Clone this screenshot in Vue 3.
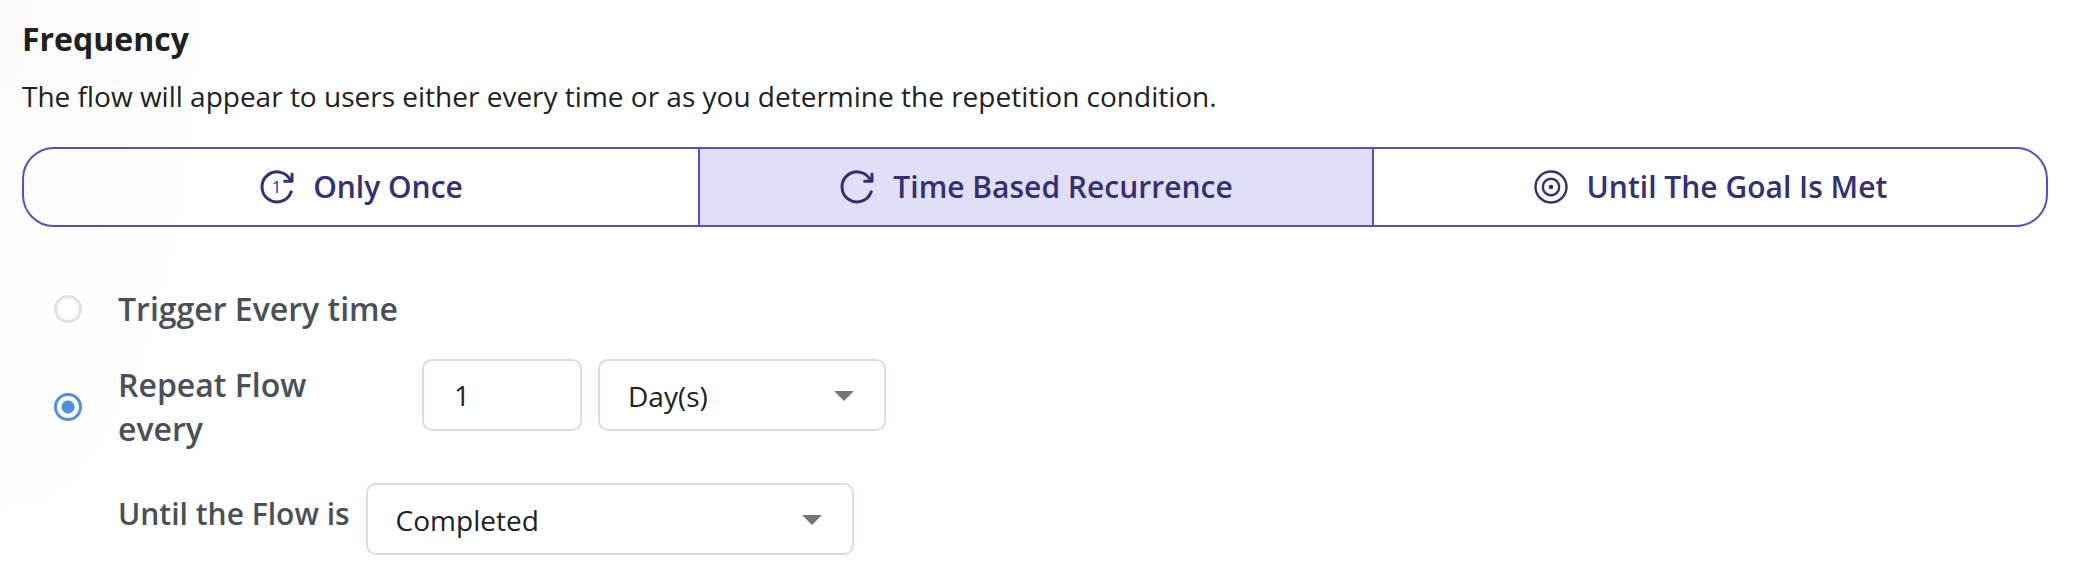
<script setup>
import { ref } from 'vue'

const tabs = [
  { id: 'once', label: 'Only Once' },
  { id: 'time', label: 'Time Based Recurrence' },
  { id: 'goal', label: 'Until The Goal Is Met' },
]
const activeTab = ref('time')
const mode = ref('repeat')
const amount = ref('1')
const unit = ref('Day(s)')
const until = ref('Completed')
</script>

<template>
  <main class="page">
    <h2 class="title">Frequency</h2>
    <p class="description">
      The flow will appear to users either every time or as you determine the repetition condition.
    </p>

    <div class="tabs" role="group" aria-label="Frequency">
      <button
        v-for="tab in tabs"
        :key="tab.id"
        type="button"
        class="tab"
        :class="{ active: activeTab === tab.id }"
        :aria-pressed="activeTab === tab.id"
        @click="activeTab = tab.id"
      >
        <svg class="icon" :class="{ thin: tab.id === 'goal' }" viewBox="0 0 36 36" aria-hidden="true">
          <template v-if="tab.id === 'goal'">
            <circle cx="18" cy="18" r="15.5" />
            <circle cx="18" cy="18" r="8.2" />
            <circle class="dot" cx="18" cy="18" r="2.3" />
          </template>
          <template v-else>
            <path d="M32.2 22.8A15 15 0 1 1 31.8 12" />
            <path d="M33 5V12.2H25.6" />
            <text v-if="tab.id === 'once'" class="digit" x="17.6" y="24.2">1</text>
          </template>
        </svg>
        <span>{{ tab.label }}</span>
      </button>
    </div>

    <div class="options">
      <div class="option">
        <input id="every" v-model="mode" class="radio" type="radio" name="mode" value="every" />
        <label class="option-label" for="every">Trigger Every time</label>
      </div>

      <div class="option">
        <input id="repeat" v-model="mode" class="radio" type="radio" name="mode" value="repeat" />
        <label class="option-label repeat-label" for="repeat">Repeat Flow every</label>
        <div class="fields">
          <input v-model="amount" class="control amount" type="text" aria-label="Repeat interval" />
          <div class="select unit">
            <select v-model="unit" class="control" aria-label="Interval unit">
              <option>Day(s)</option>
            </select>
            <svg class="caret" viewBox="0 0 20 10" aria-hidden="true"><path d="M0 0H20L10 10Z" /></svg>
          </div>
        </div>
      </div>

      <div class="until">
        <label class="until-label" for="until">Until the Flow is</label>
        <div class="select state">
          <select id="until" v-model="until" class="control">
            <option>Completed</option>
          </select>
          <svg class="caret" viewBox="0 0 20 10" aria-hidden="true"><path d="M0 0H20L10 10Z" /></svg>
        </div>
      </div>
    </div>
  </main>
</template>

<style>
body {
  background: #fefefe;
}
</style>

<style scoped>
.page {
  box-sizing: border-box;
  min-height: 100vh;
  padding: 17px 28px 20px 22px;
  background: radial-gradient(ellipse 200px 520px at 0 0, #fafafa, #fefefe);
  color: #212121;
  font-family: "Open Sans", "Noto Sans", sans-serif;
}

.title {
  margin: 0 0 16px;
  font-size: 32px;
  font-weight: 700;
  line-height: 44px;
}

.description {
  margin: 0 0 32px;
  font-size: 28px;
  line-height: 38px;
}

.tabs {
  display: grid;
  grid-template-columns: repeat(3, 1fr);
  overflow: hidden;
  border: 2px solid #5552b9;
  border-radius: 32px;
}

.tab {
  display: flex;
  align-items: center;
  justify-content: center;
  gap: 18px;
  padding: 18px;
  border: 0;
  background: transparent;
  color: #33316f;
  font: 600 30px/40px "Open Sans", "Noto Sans", sans-serif;
  cursor: pointer;
}

.tab + .tab {
  border-left: 2px solid #5552b9;
}

.tab.active {
  background: #e1dff7;
}

.icon {
  width: 36px;
  height: 36px;
  fill: none;
  stroke: #33316f;
  stroke-width: 3;
  stroke-linecap: round;
  stroke-linejoin: round;
}

.icon.thin {
  stroke-width: 2.4;
}

.icon .dot,
.icon .digit {
  fill: #33316f;
  stroke: none;
}

.icon .digit {
  font-size: 17px;
  font-weight: 500;
  text-anchor: middle;
}

.options {
  margin-top: 60px;
  padding-left: 32px;
}

.option {
  display: flex;
  align-items: center;
}

.radio {
  appearance: none;
  box-sizing: border-box;
  flex: none;
  width: 28px;
  height: 28px;
  margin: 0 36px 0 0;
  border: 3px solid #dee2e5;
  border-radius: 50%;
  background: #fff;
}

.radio:checked {
  border-color: #5290dd;
  background: radial-gradient(circle, #5290dd 6px, #fff 7px);
}

.option-label {
  color: #495057;
  font-size: 32px;
  font-weight: 600;
  line-height: 44px;
}

.repeat-label {
  width: 240px;
  padding-top: 4px;
}

.option:nth-child(2) {
  margin-top: 28px;
}

.option:nth-child(2) .radio {
  margin-top: 4px;
}

.fields {
  display: flex;
  align-self: flex-start;
  gap: 16px;
  margin-left: 64px;
}

.control {
  box-sizing: border-box;
  width: 100%;
  height: 72px;
  margin: 0;
  padding: 0 28px;
  border: 2px solid #d9daea;
  border-radius: 10px;
  background: #fff;
  color: #212121;
  font: 400 28px/38px "Open Sans", "Noto Sans", sans-serif;
}

.control.amount {
  width: 160px;
  padding: 0 30px;
}

.select {
  position: relative;
}

.select .control {
  appearance: none;
  padding-top: 2px;
}

.unit {
  width: 288px;
}

.state {
  width: 488px;
}

.caret {
  position: absolute;
  top: 32px;
  right: 32px;
  width: 20px;
  height: 10px;
  fill: #757575;
  pointer-events: none;
}

.until {
  display: flex;
  align-items: flex-start;
  gap: 16px;
  margin: 32px 0 0 64px;
}

.until-label {
  padding-top: 11px;
  color: #495057;
  font-size: 30px;
  font-weight: 600;
  line-height: 40px;
}
</style>
